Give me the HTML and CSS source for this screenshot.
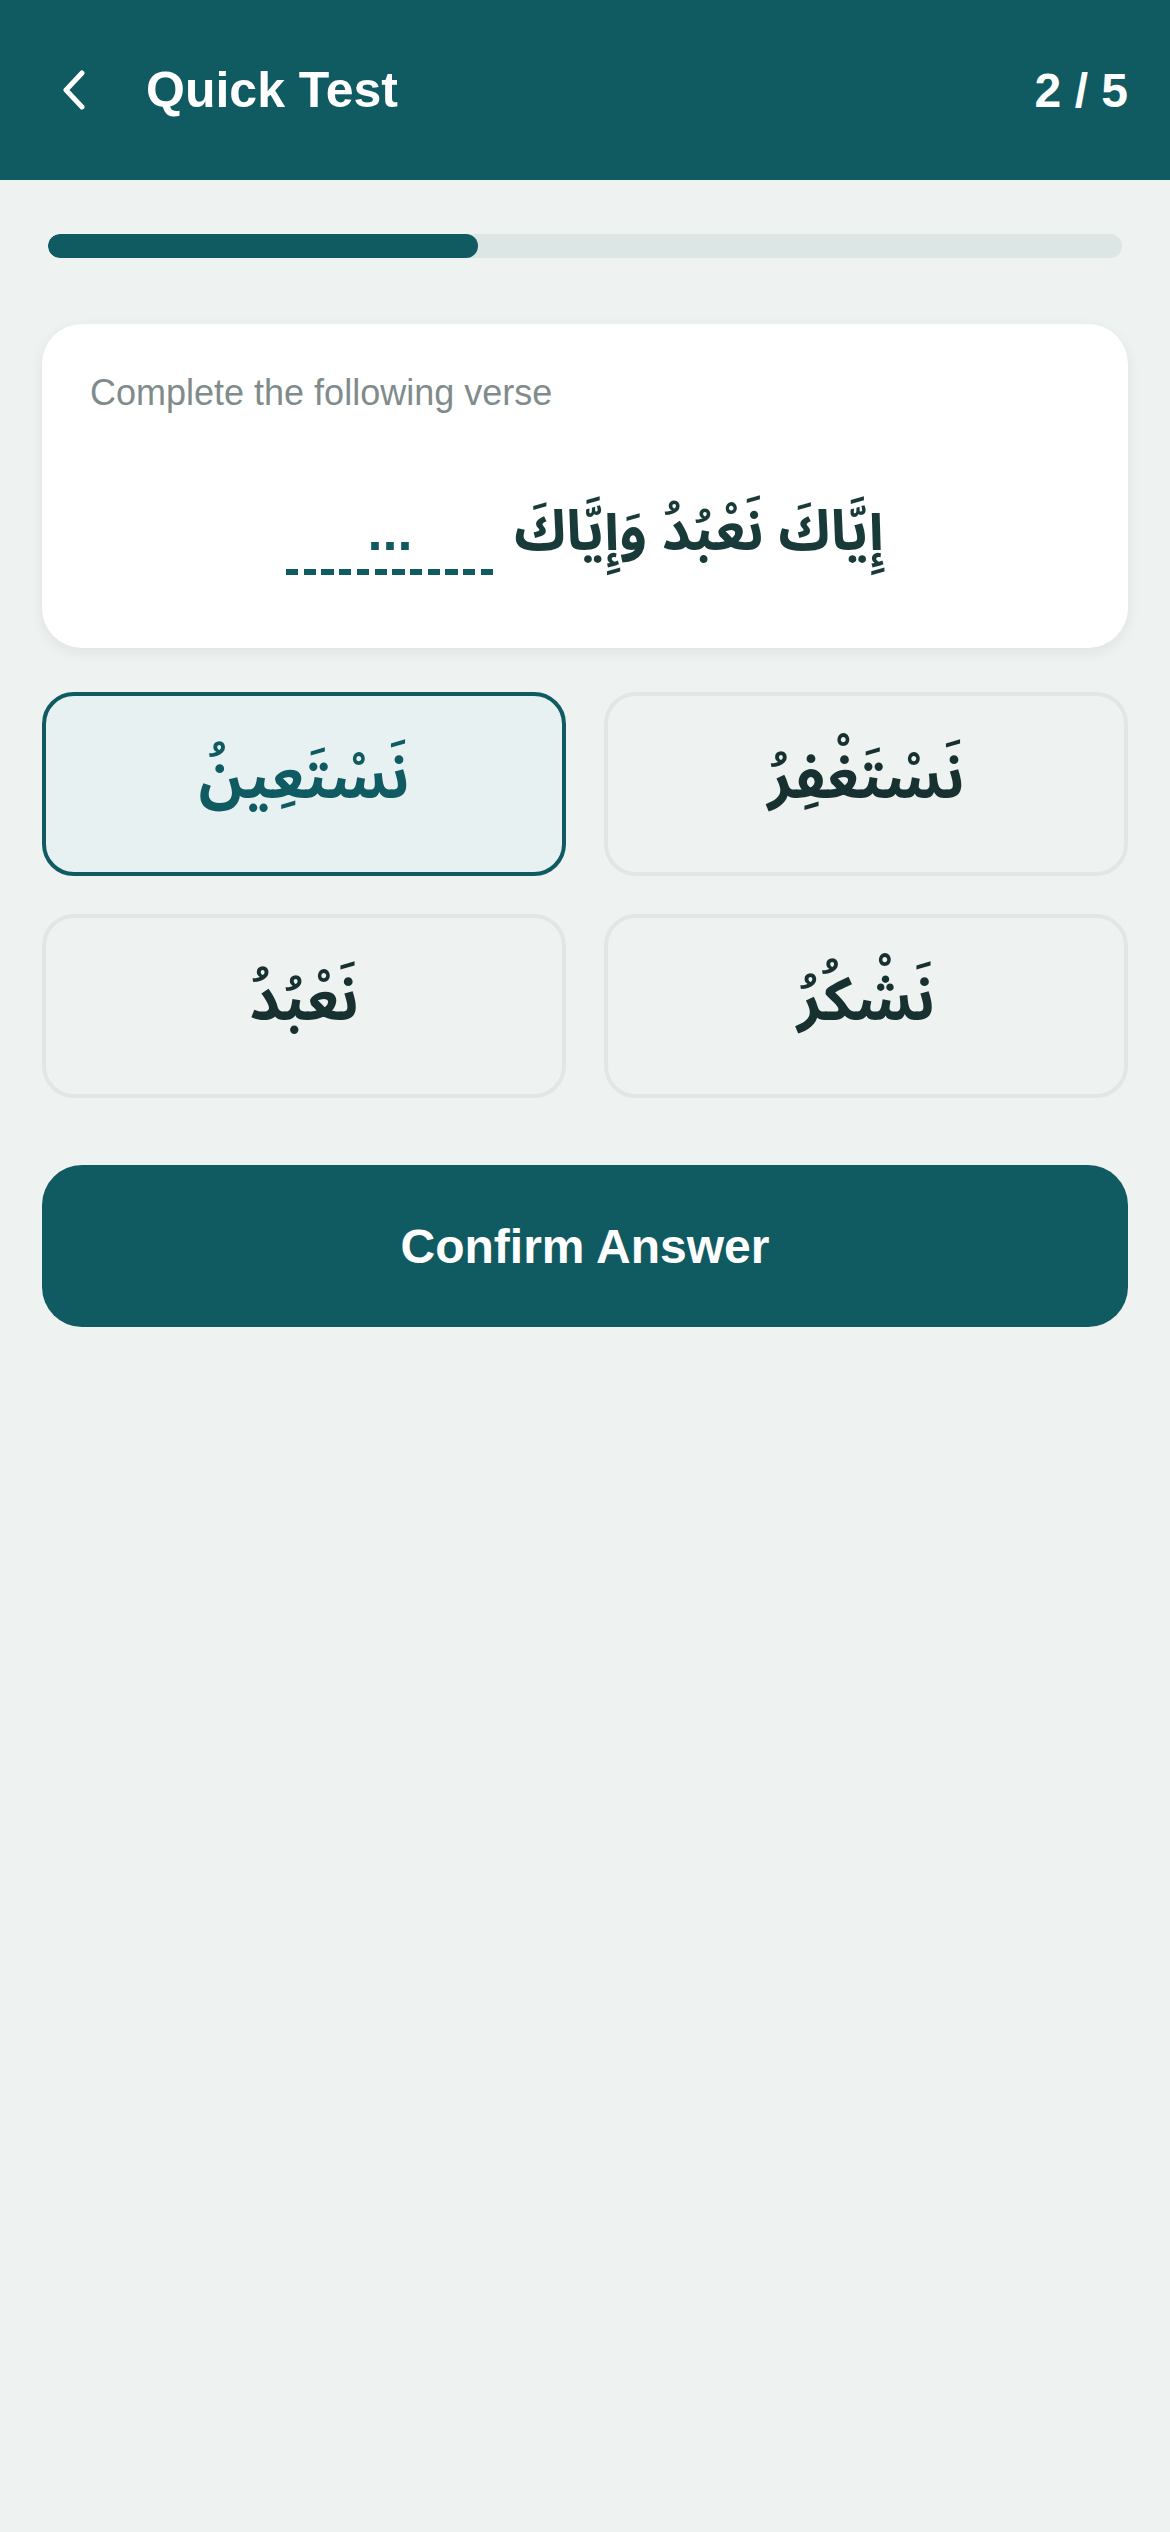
FILE: index.html
```html
<!DOCTYPE html>
<html lang="en">
<head>
<meta charset="utf-8">
<title>Quick Test</title>
<link rel="stylesheet" href="styles.css">
</head>
<body>
<header class="topbar">
  <div class="topbar-left">
    <button class="back" aria-label="Back">
      <svg viewBox="0 0 24 40" width="24" height="40"><path d="M20 3 L4 20 L20 37" fill="none" stroke="#fff" stroke-width="5" stroke-linecap="round" stroke-linejoin="round"/></svg>
    </button>
    <h1 class="title">Quick Test</h1>
  </div>
  <div class="counter">2 / 5</div>
</header>

<main class="content">
  <div class="progress"><div class="progress-fill"></div></div>

  <section class="card">
    <p class="prompt">Complete the following verse</p>
    <p class="verse" dir="rtl"><span class="verse-text">إِيَّاكَ نَعْبُدُ وَإِيَّاكَ</span> <span class="blank">...</span></p>
  </section>

  <div class="options" dir="ltr">
    <button class="option selected"><span dir="rtl">نَسْتَعِينُ</span></button>
    <button class="option"><span dir="rtl">نَسْتَغْفِرُ</span></button>
    <button class="option"><span dir="rtl">نَعْبُدُ</span></button>
    <button class="option"><span dir="rtl">نَشْكُرُ</span></button>
  </div>

  <button class="confirm">Confirm Answer</button>
</main>
</body>
</html>
```

FILE: styles.css
```css
* { box-sizing: border-box; }

html, body {
  margin: 0;
  padding: 0;
}

body {
  width: 1170px;
  min-height: 2532px;
  background: #eef2f1;
  font-family: "Liberation Sans", Arial, sans-serif;
  color: #173331;
}

.topbar {
  height: 180px;
  background: #105a61;
  display: flex;
  align-items: center;
  justify-content: space-between;
  padding: 0 42px 0 62px;
  color: #fff;
}

.topbar-left {
  display: flex;
  align-items: center;
  gap: 60px;
}

.back {
  background: none;
  border: 0;
  padding: 0;
  display: flex;
  align-items: center;
  cursor: pointer;
}

.title {
  margin: 0;
  font-size: 50px;
  font-weight: 700;
  letter-spacing: 0;
}

.counter {
  font-size: 48px;
  font-weight: 700;
}

.content {
  padding: 54px 42px 0 42px;
  display: flex;
  flex-direction: column;
}

.progress {
  margin: 0 6px;
  height: 24px;
  border-radius: 12px;
  background: #dce6e4;
  overflow: hidden;
}

.progress-fill {
  width: 40%;
  height: 100%;
  background: #105a61;
  border-radius: 12px;
}

.card {
  margin-top: 66px;
  background: #fff;
  border-radius: 40px;
  padding: 48px 48px 0 48px;
  height: 324px;
  box-shadow: 0 4px 14px rgba(20, 50, 50, 0.07);
}

.prompt {
  margin: 0;
  font-size: 36px;
  color: #7f8c8b;
}

.verse {
  margin: 90px 0 0 0;
  text-align: center;
  font-family: "Noto Sans Arabic", "DejaVu Sans", sans-serif;
  font-size: 56px;
  font-weight: 700;
  color: #183b39;
  line-height: 1;
}

.verse-text {
  margin-left: 6px;
}

.blank {
  display: inline-block;
  width: 207px;
  text-align: center;
  color: #105a61;
  font-family: "Liberation Sans", Arial, sans-serif;
  font-size: 54px;
  font-weight: 700;
  line-height: 1;
  padding-bottom: 17px;
  background-image: repeating-linear-gradient(to right, #105a61 0 12.3px, transparent 12.3px 17.7px);
  background-size: 100% 6px;
  background-position: left bottom;
  background-repeat: no-repeat;
}

.options {
  margin-top: 44px;
  display: grid;
  grid-template-columns: 1fr 1fr;
  column-gap: 38px;
  row-gap: 38px;
}

.option {
  height: 184px;
  border: 4px solid #e2e7e6;
  border-radius: 32px;
  background: #eef2f1;
  display: flex;
  align-items: center;
  justify-content: center;
  font-family: "Noto Sans Arabic", "DejaVu Sans", sans-serif;
  font-size: 60px;
  font-weight: 700;
  color: #173130;
  padding: 0 0 10px 0;
  cursor: pointer;
}

.option.selected {
  border-color: #105a61;
  background: #e8f1f1;
  color: #105a61;
}

.confirm {
  margin-top: 67px;
  height: 162px;
  border: 0;
  border-radius: 40px;
  background: #105a61;
  color: #fff;
  font-family: "Liberation Sans", Arial, sans-serif;
  font-size: 48px;
  font-weight: 700;
  cursor: pointer;
}
```
